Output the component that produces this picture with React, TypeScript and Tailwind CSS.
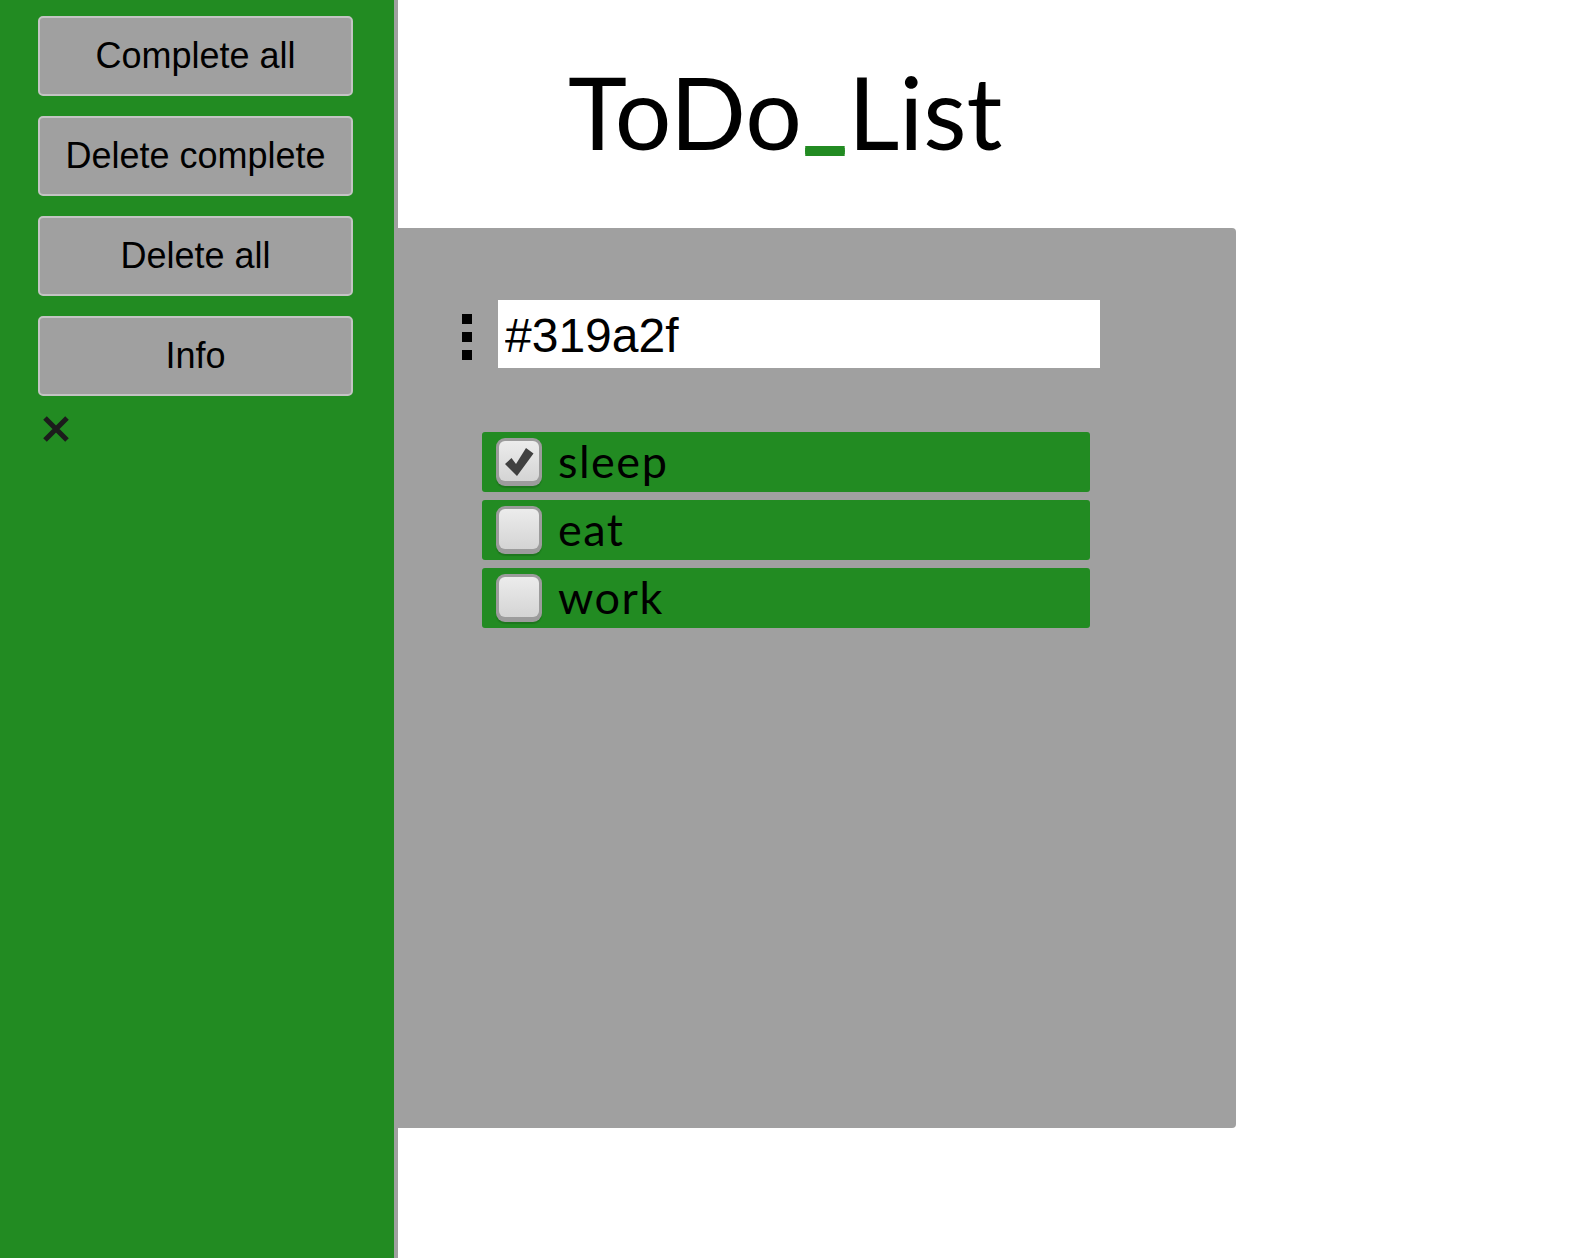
import React from "react";

const todos = [
  { id: 1, text: "sleep", done: true },
  { id: 2, text: "eat", done: false },
  { id: 3, text: "work", done: false },
];

const actions = ["Complete all", "Delete complete", "Delete all", "Info"];

function Checkbox({ checked }: { checked: boolean }) {
  return (
    <div className="w-[46px] h-[48px] shrink-0 rounded-[9px] bg-[#9c9c9c] p-[3px] pb-[5px] shadow-[0_2px_1px_rgba(0,0,0,0.15)]">
      <div className="w-full h-full rounded-[6px] bg-gradient-to-b from-[#ececec] to-[#d4d4d4] flex items-center justify-center">
        {checked && (
          <svg width="30" height="32" viewBox="0 0 30 32">
            <path d="M1 19 L7.5 13 L12 19 L22 3 L29.5 8.5 L13 31 Z" fill="#404040" />
          </svg>
        )}
      </div>
    </div>
  );
}

export default function App() {
  return (
    <div className="min-h-screen flex bg-white" style={{ fontFamily: '"Liberation Sans", Arial, sans-serif' }}>
      <aside className="w-[398px] shrink-0 bg-[#228b22] border-r-4 border-[#a0a0a0] pl-[38px] pt-4 flex flex-col">
        <div className="flex flex-col gap-5">
          {actions.map((a) => (
            <button
              key={a}
              className="w-[315px] h-[80px] rounded-[5px] border-2 border-[#c4c4c4] bg-[#a0a0a0] text-[36px] text-black leading-none pb-[1px]"
            >
              {a}
            </button>
          ))}
        </div>
        <button className="mt-[19px] ml-[4px] w-[28px] h-[28px]" aria-label="close">
          <svg width="28" height="28" viewBox="0 0 28 28">
            <path d="M3 3 L25 25 M25 3 L3 25" stroke="#1c1c1c" strokeWidth="5" />
          </svg>
        </button>
      </aside>

      <main className="flex-1 flex flex-col">
        <div className="h-[228px] pl-[170px] pt-[56px]">
          <h1 className="text-[100px] leading-[1.1] text-black" style={{ fontFamily: "Lato, sans-serif" }}>
            ToDo
            <span className="relative -top-[12px] text-[#228b22] [text-shadow:0_2px_0_#228b22,0_4px_0_#228b22]">_</span>
            List
          </h1>
        </div>

        <section className="w-[838px] h-[900px] bg-[#a0a0a0] rounded-r-[4px] pt-[72px]">
          <div className="flex items-center pl-[64px]">
            <div className="flex flex-col gap-[8px] w-[10px] mt-[6px]">
              <span className="block w-[10px] h-[10px] bg-black" />
              <span className="block w-[10px] h-[10px] bg-black" />
              <span className="block w-[10px] h-[10px] bg-black" />
            </div>
            <input
              readOnly
              value="#319a2f"
              className="ml-[26px] w-[602px] h-[68px] bg-white pl-[7px] pt-[4px] text-[48px] text-black outline-none"
            />
          </div>

          <ul className="mt-[64px] ml-[84px] w-[608px] flex flex-col gap-2">
            {todos.map((t) => (
              <li key={t.id} className="h-[60px] rounded-[3px] bg-[#228b22] flex items-center pl-[14px]">
                <Checkbox checked={t.done} />
                <span
                  className="ml-4 text-[45px] leading-none text-black tracking-[1.5px] pb-[2px]"
                  style={{ fontFamily: "Lato, sans-serif" }}
                >
                  {t.text}
                </span>
              </li>
            ))}
          </ul>
        </section>
      </main>
    </div>
  );
}
